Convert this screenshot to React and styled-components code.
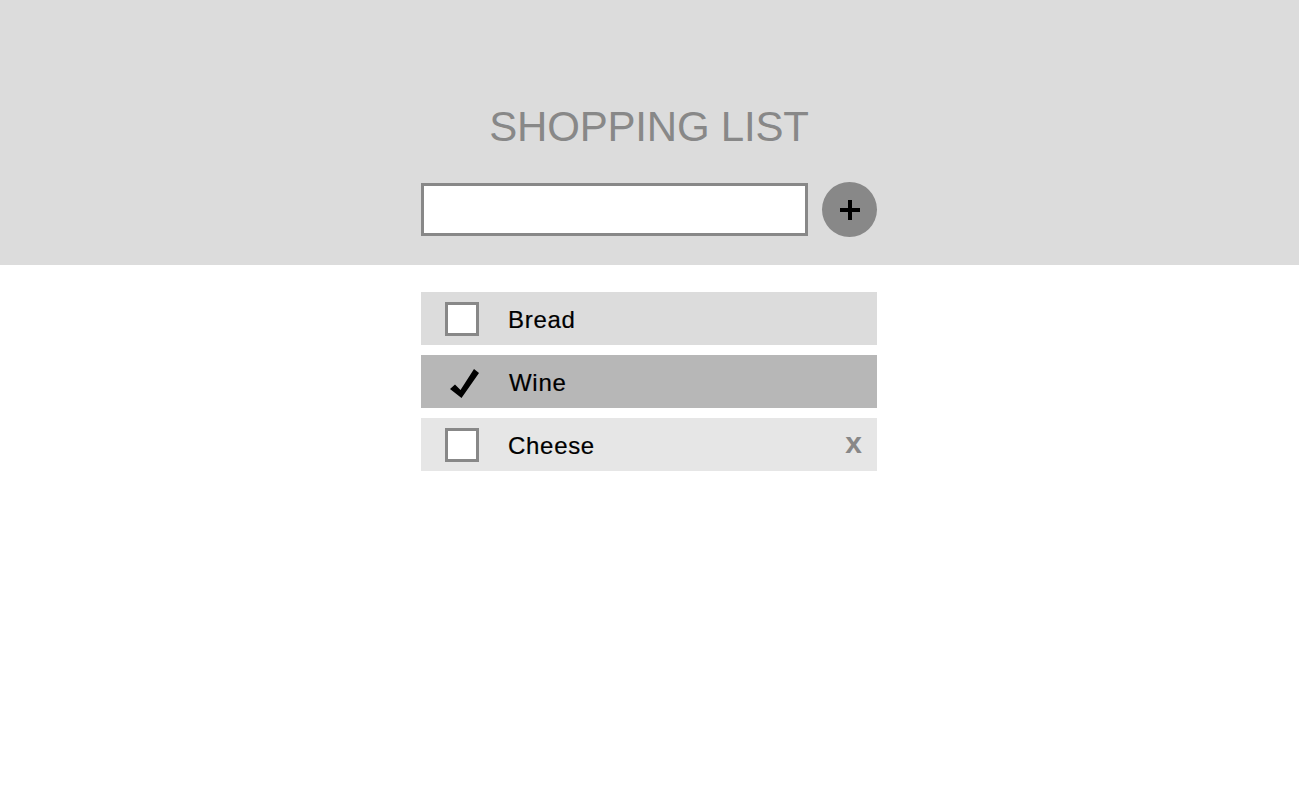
import React from "react";
import styled, { createGlobalStyle } from "styled-components";

const Global = createGlobalStyle`
  html, body { margin: 0; padding: 0; background: #fff; }
  body { font-family: "Liberation Sans", Arial, sans-serif; }
`;

const Header = styled.header`
  background: #dcdcdc;
  width: 1299px;
  height: 265px;
  box-sizing: border-box;
  padding: 106px 1px 0 0;
  display: flex;
  flex-direction: column;
  align-items: center;
`;

const Title = styled.h1`
  margin: 0 0 34px;
  font-size: 42px;
  line-height: 42px;
  font-weight: 400;
  color: #888;
  letter-spacing: -0.2px;
`;

const AddRow = styled.div`
  display: flex;
  align-items: center;
  gap: 14px;
  width: 456px;
`;

const Input = styled.input`
  box-sizing: border-box;
  width: 387px;
  height: 53px;
  border: 3px solid #888;
  background: #fff;
  outline: none;
  font-family: inherit;
  font-size: 22px;
  padding: 0 10px;
  margin: 0;
`;

const AddButton = styled.button`
  width: 55px;
  height: 55px;
  border-radius: 50%;
  border: none;
  background: #888;
  padding: 0;
  display: flex;
  align-items: center;
  justify-content: center;
  cursor: pointer;
`;

const List = styled.ul`
  list-style: none;
  margin: 27px 0 0 calc(50% - 229px);
  padding: 0;
  width: 456px;
  display: flex;
  flex-direction: column;
  gap: 10px;
`;

const Row = styled.li`
  height: 53px;
  background: ${(p) => p.$bg};
  display: flex;
  align-items: center;
  padding: 0 15px 0 24px;
  box-sizing: border-box;
`;

const Box = styled.span`
  box-sizing: border-box;
  width: 34px;
  height: 34px;
  flex: none;
  border: ${(p) => (p.$checked ? "none" : "3px solid #888")};
  background: ${(p) => (p.$checked ? "transparent" : "#fff")};
  display: flex;
  align-items: center;
  justify-content: center;
`;

const Label = styled.span`
  margin-left: ${(p) => (p.$checked ? "30px" : "29px")};
  padding-top: 3px;
  font-size: 24px;
  letter-spacing: 0.7px;
  color: #000;
  flex: 1;
  -webkit-text-stroke: 0.2px #000;
`;

const Remove = styled.span`
  font-size: 30px;
  font-weight: 700;
  color: #888;
  line-height: 1;
  padding-bottom: 4px;
`;

const Check = () => (
  <svg width="34" height="34" viewBox="0 0 34 34">
    <path d="M5 24 L10 19.5 L15.5 25 L29 4 L34 8 L16.5 33 Z" fill="#000" />
  </svg>
);

const Plus = () => (
  <svg width="22" height="22" viewBox="0 0 22 22">
    <rect x="9" y="1" width="4" height="20" fill="#000" />
    <rect x="1" y="9" width="20" height="4" fill="#000" />
  </svg>
);

const items = [
  { name: "Bread", checked: false, bg: "#dcdcdc" },
  { name: "Wine", checked: true, bg: "#b7b7b7" },
  { name: "Cheese", checked: false, bg: "#e6e6e6", removable: true },
];

export default function App() {
  return (
    <>
      <Global />
      <Header>
        <Title>SHOPPING LIST</Title>
        <AddRow>
          <Input type="text" />
          <AddButton aria-label="add">
            <Plus />
          </AddButton>
        </AddRow>
      </Header>
      <List>
        {items.map((it) => (
          <Row key={it.name} $bg={it.bg}>
            <Box $checked={it.checked}>{it.checked && <Check />}</Box>
            <Label $checked={it.checked}>{it.name}</Label>
            {it.removable && <Remove>x</Remove>}
          </Row>
        ))}
      </List>
    </>
  );
}
